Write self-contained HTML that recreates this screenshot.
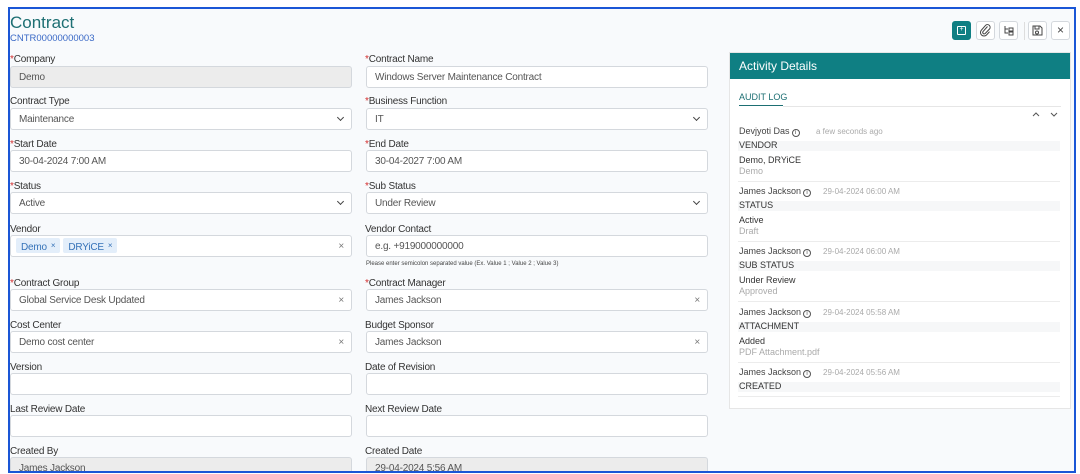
<!DOCTYPE html><html><head><style>
*{box-sizing:border-box;margin:0;padding:0}
body{width:1080px;height:474px;overflow:hidden;background:#fff;font-family:"Liberation Sans",sans-serif;position:relative}
.frame{position:absolute;left:8px;top:7px;width:1068px;height:466px;border:2px solid #1a56d6;background:#f8fafc;overflow:hidden}
.a{position:absolute;white-space:nowrap}
.lbl{font-size:10px;color:#333;letter-spacing:-.2px}
.lbl b{color:#d32f2f;font-weight:normal}
.in{position:absolute;height:22px;border:1px solid #d4d8dd;border-radius:3px;background:#fff;font-size:10px;color:#555;padding:0 8px;line-height:21px;letter-spacing:-.2px}
.in.g{background:#ececec}
.x{position:absolute;right:7px;top:0;color:#777;font-size:10px}
.chev{position:absolute;right:8px;top:6px;width:5px;height:5px;border-right:1.2px solid #444;border-bottom:1.2px solid #444;transform:rotate(45deg)}
.tag{display:inline-block;background:#e3eefa;color:#3572b8;padding:0 5px;height:15px;line-height:15px;margin-top:2px;margin-right:3px;border-radius:2px}
.tag sup{font-size:8px;margin-left:4px;vertical-align:2px}
.btn{position:absolute;top:12px;width:19px;height:19px;border:1px solid #d4d8dd;border-radius:3px;background:#fff}
.e{font-size:9px;color:#333}
.nm{font-size:9px;color:#444}
.tm{font-size:8px;color:#aaa}
.band{position:absolute;left:8px;width:322px;height:10px;background:#f6f7f8}
.dv{position:absolute;left:8px;width:322px;border-top:1px solid #ececec}
.i{display:inline-block;width:8px;height:8px;border:1px solid #555;border-radius:50%;font-size:6px;line-height:6px;text-align:center;vertical-align:0;margin-left:2px}
</style></head><body><div class="frame">
<div class="a" style="left:0px;top:4px;font-size:17px;color:#1d6f73">Contract</div>
<div class="a" style="left:0px;top:24px;font-size:9.5px;color:#3a69c6">CNTR00000000003</div>

<div class="a lbl" style="left:0px;top:45px"><b>*</b>Company</div>
<div class="in g" style="left:0px;top:57px;width:342px">Demo</div>
<div class="a lbl" style="left:355px;top:45px"><b>*</b>Contract Name</div>
<div class="in" style="left:356px;top:57px;width:342px">Windows Server Maintenance Contract</div>

<div class="a lbl" style="left:0px;top:87px">Contract Type</div>
<div class="in" style="left:0px;top:99px;width:342px">Maintenance<span class="chev"></span></div>
<div class="a lbl" style="left:355px;top:87px"><b>*</b>Business Function</div>
<div class="in" style="left:356px;top:99px;width:342px">IT<span class="chev"></span></div>

<div class="a lbl" style="left:0px;top:130px"><b>*</b>Start Date</div>
<div class="in" style="left:0px;top:141px;width:342px">30-04-2024 7:00 AM</div>
<div class="a lbl" style="left:355px;top:130px"><b>*</b>End Date</div>
<div class="in" style="left:356px;top:141px;width:342px">30-04-2027 7:00 AM</div>

<div class="a lbl" style="left:0px;top:172px"><b>*</b>Status</div>
<div class="in" style="left:0px;top:183px;width:342px">Active<span class="chev"></span></div>
<div class="a lbl" style="left:355px;top:172px"><b>*</b>Sub Status</div>
<div class="in" style="left:356px;top:183px;width:342px">Under Review<span class="chev"></span></div>

<div class="a lbl" style="left:0px;top:215px">Vendor</div>
<div class="in" style="left:0px;top:226px;width:342px;padding-left:5px;line-height:normal"><span class="tag">Demo<sup>×</sup></span><span class="tag">DRYiCE<sup>×</sup></span><span class="x" style="line-height:21px">×</span></div>
<div class="a lbl" style="left:355px;top:215px">Vendor Contact</div>
<div class="in" style="left:356px;top:226px;width:342px">e.g. +919000000000</div>
<div class="a" style="left:356px;top:252px;font-size:6px;color:#444">Please enter semicolon separated value (Ex. Value 1 ; Value 2 ; Value 3)</div>

<div class="a lbl" style="left:0px;top:269px"><b>*</b>Contract Group</div>
<div class="in" style="left:0px;top:280px;width:342px">Global Service Desk Updated<span class="x">×</span></div>
<div class="a lbl" style="left:355px;top:269px"><b>*</b>Contract Manager</div>
<div class="in" style="left:356px;top:280px;width:342px">James Jackson<span class="x">×</span></div>

<div class="a lbl" style="left:0px;top:311px">Cost Center</div>
<div class="in" style="left:0px;top:322px;width:342px">Demo cost center<span class="x">×</span></div>
<div class="a lbl" style="left:355px;top:311px">Budget Sponsor</div>
<div class="in" style="left:356px;top:322px;width:342px">James Jackson<span class="x">×</span></div>

<div class="a lbl" style="left:0px;top:353px">Version</div>
<div class="in" style="left:0px;top:364px;width:342px"></div>
<div class="a lbl" style="left:355px;top:353px">Date of Revision</div>
<div class="in" style="left:356px;top:364px;width:342px"></div>

<div class="a lbl" style="left:0px;top:395px">Last Review Date</div>
<div class="in" style="left:0px;top:406px;width:342px"></div>
<div class="a lbl" style="left:355px;top:395px">Next Review Date</div>
<div class="in" style="left:356px;top:406px;width:342px"></div>

<div class="a lbl" style="left:0px;top:437px">Created By</div>
<div class="in g" style="left:0px;top:448px;width:342px">James Jackson</div>
<div class="a lbl" style="left:355px;top:437px">Created Date</div>
<div class="in g" style="left:356px;top:448px;width:342px">29-04-2024 5:56 AM</div>

<div class="btn" style="left:942px;background:#0f7f83;border-color:#0f7f83"><div style="position:absolute;left:4px;top:4px;width:9px;height:9px;border:1.3px solid #fff;border-radius:1px;font-size:7px;color:#fff;line-height:6px;text-align:center">+</div></div>
<div class="btn" style="left:966px"><svg width="17" height="17" viewBox="0 0 17 17" style="position:absolute;left:0;top:0"><path d="M10.5 4.5 L6 9.5 a1.5 1.5 0 0 0 2.2 2 L12.5 7 a2.7 2.7 0 0 0 -3.8 -3.8 L4.5 8 a3.5 3.5 0 0 0 5 5 l3 -3.3" fill="none" stroke="#444" stroke-width="1"/></svg></div>
<div class="btn" style="left:989px"><svg width="17" height="17" viewBox="0 0 17 17" style="position:absolute;left:0;top:0"><path d="M5 4v7h3M5 7h3M9 6h4v3H9zM9 10h4v3H9z" fill="none" stroke="#444" stroke-width="1"/></svg></div>
<div class="a" style="left:1014px;top:13px;height:18px;border-left:1px solid #ddd"></div>
<div class="btn" style="left:1018px"><svg width="17" height="17" viewBox="0 0 17 17" style="position:absolute;left:0;top:0"><path d="M4 4h7l2 2v7H4z M6 4v3h4V4 M6.5 10.5a1.5 1.5 0 1 0 3 0a1.5 1.5 0 1 0 -3 0" fill="none" stroke="#444" stroke-width="1"/></svg></div>
<div class="btn" style="left:1041px;text-align:center;font-size:12px;line-height:16px;color:#444">×</div>

<div class="a" style="left:719px;top:43px;width:342px;height:357px;background:#fff;border:1px solid #e6e6e6">
<div style="height:26px;background:#0f7f83;color:#fff;font-size:12px;line-height:26px;padding-left:9px">Activity Details</div>
<div class="a" style="left:9px;top:39px;font-size:9px;color:#1d6f73">AUDIT LOG</div>
<div class="a" style="left:9px;top:52px;width:44px;border-top:1.5px solid #1d6f73"></div>
<div class="a" style="left:53px;top:53px;width:278px;border-top:1px solid #e6e6e6"></div>
<svg class="a" style="left:302px;top:58px" width="26" height="8" viewBox="0 0 26 8"><path d="M1 5l3-3 3 3M19 2l3 3 3-3" fill="none" stroke="#555" stroke-width="1"/></svg>

<div class="band" style="top:88px"></div>
<div class="a nm" style="left:9px;top:73px">Devjyoti Das<span class="i">i</span></div><div class="a tm" style="left:86px;top:74px">a few seconds ago</div>
<div class="a e" style="left:9px;top:87px">VENDOR</div>
<div class="a e" style="left:9px;top:102px">Demo, DRYiCE</div>
<div class="a tm" style="left:9px;top:113px;font-size:9px">Demo</div>
<div class="dv" style="top:128px"></div>

<div class="band" style="top:148px"></div>
<div class="a nm" style="left:9px;top:133px">James Jackson<span class="i">i</span></div><div class="a tm" style="left:93px;top:134px">29-04-2024 06:00 AM</div>
<div class="a e" style="left:9px;top:147px">STATUS</div>
<div class="a e" style="left:9px;top:162px">Active</div>
<div class="a tm" style="left:9px;top:173px;font-size:9px">Draft</div>
<div class="dv" style="top:188px"></div>

<div class="band" style="top:208px"></div>
<div class="a nm" style="left:9px;top:193px">James Jackson<span class="i">i</span></div><div class="a tm" style="left:93px;top:194px">29-04-2024 06:00 AM</div>
<div class="a e" style="left:9px;top:207px">SUB STATUS</div>
<div class="a e" style="left:9px;top:222px">Under Review</div>
<div class="a tm" style="left:9px;top:233px;font-size:9px">Approved</div>
<div class="dv" style="top:248px"></div>

<div class="band" style="top:269px"></div>
<div class="a nm" style="left:9px;top:254px">James Jackson<span class="i">i</span></div><div class="a tm" style="left:93px;top:255px">29-04-2024 05:58 AM</div>
<div class="a e" style="left:9px;top:268px">ATTACHMENT</div>
<div class="a e" style="left:9px;top:283px">Added</div>
<div class="a tm" style="left:9px;top:294px;font-size:9px">PDF Attachment.pdf</div>
<div class="dv" style="top:309px"></div>

<div class="band" style="top:329px"></div>
<div class="a nm" style="left:9px;top:314px">James Jackson<span class="i">i</span></div><div class="a tm" style="left:93px;top:315px">29-04-2024 05:56 AM</div>
<div class="a e" style="left:9px;top:328px">CREATED</div>
<div class="dv" style="top:343px"></div>
</div>
</div></body></html>
